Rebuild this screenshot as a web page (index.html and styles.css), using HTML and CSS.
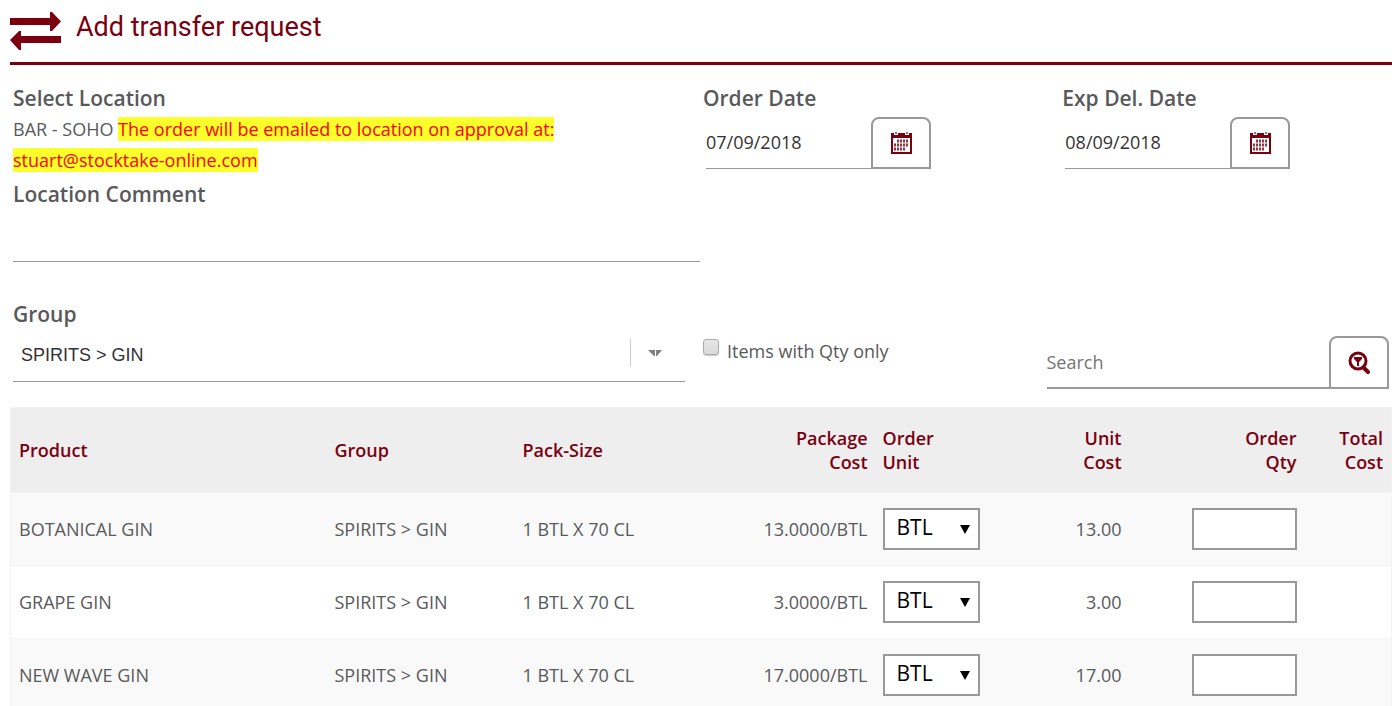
FILE: index.html
```
<!DOCTYPE html>
<html lang="en">
<head>
  <meta charset="UTF-8">
  <meta name="viewport" content="width=device-width, initial-scale=1.0">
  <title>Add transfer request</title>
  <link rel="stylesheet" href="styles.css">
</head>
<body>

<!-- shared icons -->
<svg class="sprite" aria-hidden="true">
  <symbol id="icon-calendar" viewBox="0 0 21 22">
    <path fill="#7a0010" d="M0 1h21v21H0z"/>
    <path fill="#fff" d="M2 6h17v14H2z"/>
    <path fill="#fff" d="M3 0h4v3H3zM14 0h4v3h-4z"/>
    <path fill="#7a0010" fill-opacity=".6" d="M4 0h2v2H4zM15 0h2v2h-2z"/>
    <path stroke="#7a0010" stroke-opacity=".8" stroke-width="3" stroke-dasharray="2 1" d="M6 9h12M3 13h15M3 17h12"/>
  </symbol>
</svg>

<header class="page-header">
  <svg class="transfer-icon" viewBox="0 0 51 38" width="51" height="38" aria-hidden="true">
    <path fill="#7a0010" d="M0 6h40V0h2l9 9.500L42 19h-2v-6H0zM51 24v7H11v7H9l-9-10 9-9h2v5z"/>
  </svg>
  <h1>Add transfer request</h1>
</header>

<form>
  <section class="details">
    <div>
      <h2>Select Location</h2>
      <p class="location"><span>BAR - SOHO</span> <mark>The order will be emailed to location on approval at: stuart@stocktake-online.com</mark></p>
      <label class="field-label comment-label" for="comment">Location Comment</label>
      <textarea id="comment" class="comment"></textarea>
    </div>
    <div>
      <label class="field-label" for="orderDate">Order Date</label>
      <div class="date-field">
        <input type="text" id="orderDate" value="07/09/2018">
        <button type="button" class="tab-button" aria-label="Pick order date"><svg width="21" height="22"><use href="#icon-calendar"/></svg></button>
      </div>
    </div>
    <div>
      <label class="field-label" for="deliveryDate">Exp Del. Date</label>
      <div class="date-field">
        <input type="text" id="deliveryDate" value="08/09/2018">
        <button type="button" class="tab-button" aria-label="Pick delivery date"><svg width="21" height="22"><use href="#icon-calendar"/></svg></button>
      </div>
    </div>
  </section>

  <section class="filters">
    <div class="group-filter">
      <label class="field-label" for="group">Group</label>
      <div class="group-select">
        <select id="group"><option>SPIRITS &gt; GIN</option></select>
        <span class="group-arrow">
          <svg width="14" height="6" viewBox="0 0 14 6" aria-hidden="true"><path fill="#808080" d="M0 0h7v6H6zM8 0h6L9 6H8z"/></svg>
        </span>
      </div>
    </div>
    <div class="qty-only">
      <input type="checkbox" id="qtyOnly">
      <label for="qtyOnly">Items with Qty only</label>
    </div>
    <div class="search">
      <input type="text" placeholder="Search" aria-label="Search">
      <button type="button" class="tab-button" aria-label="Filter">
        <svg width="22" height="24" viewBox="0 0 22 24" fill="none" aria-hidden="true">
          <circle cx="10" cy="10" r="8" stroke="#7a0010" stroke-width="3"/>
          <path stroke="#7a0010" stroke-width="4" stroke-linecap="round" d="M16 17l4 4"/>
          <path fill="#7a0010" d="M6 6h8v2l-3 3v4H9v-4L6 8z"/>
        </svg>
      </button>
    </div>
  </section>

  <table class="products">
    <colgroup>
      <col>
      <col class="col-group">
      <col class="col-pack">
      <col class="col-package">
      <col class="col-order-unit">
      <col class="col-unit-cost">
      <col class="col-qty">
      <col class="col-total">
    </colgroup>
    <thead>
      <tr>
        <th>Product</th>
        <th>Group</th>
        <th>Pack-Size</th>
        <th class="num">Package<br>Cost</th>
        <th>Order<br>Unit</th>
        <th class="num">Unit<br>Cost</th>
        <th class="num">Order<br>Qty</th>
        <th class="num">Total<br>Cost</th>
      </tr>
    </thead>
    <tbody>
      <tr>
        <td>BOTANICAL GIN</td>
        <td>SPIRITS &gt; GIN</td>
        <td>1 BTL X 70 CL</td>
        <td class="num">13.0000/BTL</td>
        <td><div class="unit"><select aria-label="Order unit"><option>BTL</option></select></div></td>
        <td class="num">13.00</td>
        <td class="num"><input type="text" class="qty" aria-label="Order qty"></td>
        <td class="num"></td>
      </tr>
      <tr>
        <td>GRAPE GIN</td>
        <td>SPIRITS &gt; GIN</td>
        <td>1 BTL X 70 CL</td>
        <td class="num">3.0000/BTL</td>
        <td><div class="unit"><select aria-label="Order unit"><option>BTL</option></select></div></td>
        <td class="num">3.00</td>
        <td class="num"><input type="text" class="qty" aria-label="Order qty"></td>
        <td class="num"></td>
      </tr>
      <tr>
        <td>NEW WAVE GIN</td>
        <td>SPIRITS &gt; GIN</td>
        <td>1 BTL X 70 CL</td>
        <td class="num">17.0000/BTL</td>
        <td><div class="unit"><select aria-label="Order unit"><option>BTL</option></select></div></td>
        <td class="num">17.00</td>
        <td class="num"><input type="text" class="qty" aria-label="Order qty"></td>
        <td class="num"></td>
      </tr>
    </tbody>
  </table>
</form>

</body>
</html>
```
FILE: styles.css
```
* { box-sizing: border-box; }
body {
  font-family: 'Open Sans', sans-serif;
  font-size: 18px;
  color: #58595b;
  background: #fff;
  margin: 0;
  padding-left: 10px;
  overflow-x: hidden;
}
.sprite {
  display: none;
}
input, select, textarea, button {
  font-family: inherit;
  font-size: 18px;
  margin: 0;
  padding: 0;
  border: 0;
  border-radius: 0;
  background: #fff;
}
button svg {
  display: block;
  margin: 0 auto;
}

/* Header */
.page-header {
  display: flex;
  align-items: flex-start;
  gap: 15px;
  height: 65px;
  padding-top: 12px;
  border-bottom: 3px solid #7a0010;
}
.page-header h1 {
  font-family: Roboto, sans-serif;
  font-size: 27px;
  font-weight: 400;
  line-height: 30px;
  color: #7a0010;
  margin: 0;
}

/* Order details */
.details {
  display: grid;
  grid-template-columns: 50% 26% 24%;
  padding-top: 18px;
}
.details h2, .field-label {
  display: block;
  font-size: 21px;
  font-weight: 600;
  line-height: 31px;
  margin: 0;
  padding-left: 3px;
}
.details > div + div .field-label {
  padding-left: 2px;
}
.location {
  line-height: 31px;
  margin: 0;
  padding: 0 120px 0 3px;
}
.location mark {
  color: #f00;
  background: #fbff2a;
}
.comment-label {
  margin-top: 3px;
}
.comment {
  display: block;
  width: calc(100% - 4px);
  height: 52px;
  margin-left: 3px;
  border-bottom: 1px solid #999;
  resize: none;
}
.date-field {
  display: flex;
  width: 225px;
  margin: 3px 0 0 5px;
}
.date-field input {
  flex: 1;
  min-width: 0;
  padding-bottom: 2px;
  color: #333;
  border-bottom: 1px solid #999;
}
.tab-button {
  flex: none;
  width: 60px;
  height: 52px;
  border: 2px solid #999;
  border-radius: 8px 8px 0 0;
  cursor: pointer;
}

/* Filters */
.filters {
  display: grid;
  grid-template-columns: 50% 25% 25%;
  padding: 37px 0 25px;
}
.group-select {
  position: relative;
  margin: 0 16px 0 3px;
}
.group-select select {
  appearance: none;
  width: 100%;
  height: 52px;
  padding: 0 60px 2px 8px;
  font-family: 'Liberation Sans', sans-serif;
  color: #333;
  border-bottom: 1px solid #999;
}
.group-arrow {
  position: absolute;
  top: 9px;
  right: 0;
  display: flex;
  align-items: center;
  width: 55px;
  height: 28px;
  padding-left: 17px;
  border-left: 1px solid #ccc;
  pointer-events: none;
}
.qty-only {
  display: flex;
  align-items: flex-start;
  gap: 8px;
  padding: 40px 0 0 2px;
}
.qty-only input {
  appearance: none;
  width: 16px;
  height: 16px;
  border: 1px solid #aaa;
  border-radius: 3px;
  background: linear-gradient(#e6e6e6, #d9d9d9);
  box-shadow: 0 1px 1px #ccc;
}
.qty-only input:checked {
  background: #7a0010;
}
.qty-only label {
  line-height: 24px;
}
.search {
  display: flex;
  align-self: end;
  height: 53px;
  margin: 0 3px -7px 0;
}
.search input {
  flex: 1;
  min-width: 0;
  border-bottom: 2px solid #999;
}
.search .tab-button {
  height: 53px;
}
.search input::placeholder {
  color: #757575;
}

/* Products table */
.products {
  width: 100%;
  table-layout: fixed;
  border-collapse: collapse;
  border: 1px solid #f3f3f3;
}
.col-group { width: 188px; }
.col-pack { width: 240px; }
.col-package { width: 121px; }
.col-order-unit { width: 112px; }
.col-unit-cost { width: 142px; }
.col-qty { width: 175px; }
.col-total { width: 87px; }
.products th {
  height: 85px;
  padding: 0 8px;
  font-size: 18px;
  font-weight: 600;
  line-height: 24px;
  text-align: left;
  color: #7a0010;
  background: #eee;
}
.products td {
  height: 73px;
  padding: 0 8px;
  font-size: 18px;
  line-height: 24px;
  border-top: 1px solid #f3f3f3;
}
.products tbody tr:nth-child(odd) {
  background: #f9f9f9;
}
.products .num {
  text-align: right;
}
.products th:nth-child(5), .products td:nth-child(5) {
  padding-left: 7px;
}
.unit {
  position: relative;
  width: 97px;
}
.unit::after {
  content: "";
  position: absolute;
  top: 17px;
  right: 10px;
  border: 5px solid transparent;
  border-top: 9px solid #000;
  border-bottom: 0;
  pointer-events: none;
}
.unit select {
  appearance: none;
  display: block;
  width: 100%;
  height: 42px;
  padding: 0 24px 4px 12px;
  font-size: 21px;
  color: #000;
  border: 2px solid #999;
}
.qty {
  display: block;
  width: 105px;
  height: 42px;
  margin-left: auto;
  padding: 0 8px;
  text-align: right;
  border: 2px solid #999;
}
```
